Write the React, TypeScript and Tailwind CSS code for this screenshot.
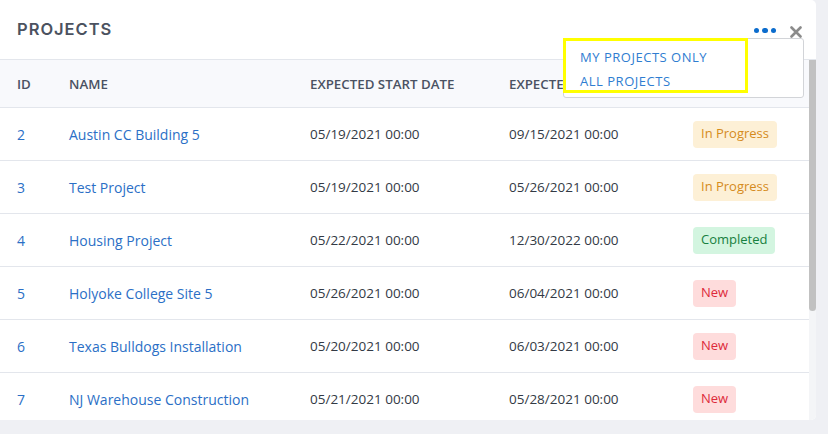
type Status = "In Progress" | "Completed" | "New";

type Project = {
    id: number;
    name: string;
    start: string;
    end: string;
    status: Status;
}

const projects: Project[] = [
    { id: 2, name: "Austin CC Building 5", start: "05/19/2021 00:00", end: "09/15/2021 00:00", status: "In Progress" },
    { id: 3, name: "Test Project", start: "05/19/2021 00:00", end: "05/26/2021 00:00", status: "In Progress" },
    { id: 4, name: "Housing Project", start: "05/22/2021 00:00", end: "12/30/2022 00:00", status: "Completed" },
    { id: 5, name: "Holyoke College Site 5", start: "05/26/2021 00:00", end: "06/04/2021 00:00", status: "New" },
    { id: 6, name: "Texas Bulldogs Installation", start: "05/20/2021 00:00", end: "06/03/2021 00:00", status: "New" },
    { id: 7, name: "NJ Warehouse Construction", start: "05/21/2021 00:00", end: "05/28/2021 00:00", status: "New" },
]

const badgeStyles: Record<Status, string> = {
    "In Progress": "bg-[#fdf0d6] text-[#d58b1c]",
    "Completed": "bg-[#d3f5e0] text-[#17803f]",
    "New": "bg-[#fedcdc] text-[#dd2a3a]",
}

const App = () => {
    return (
        <div className="w-[828px] h-[434px] bg-[#eff0f4] font-['Open_Sans',sans-serif]">
            <div className="relative w-[816px] h-[420px] bg-white rounded-r-[5px] flex flex-col overflow-hidden">
                <div className="h-[59px] shrink-0 flex items-center justify-between pl-[17px] pr-[14px]">
                    <h2 className="font-['Inter',sans-serif] font-semibold text-[16.5px] tracking-[0.06em] text-[#4b5260]">PROJECTS</h2>
                    <div className="flex items-center gap-[14px] pt-[2px]">
                        <div className="flex gap-[3px]">
                            <span className="w-[5.5px] h-[5.5px] rounded-full bg-[#0b6ccd]" />
                            <span className="w-[5.5px] h-[5.5px] rounded-full bg-[#0b6ccd]" />
                            <span className="w-[5.5px] h-[5.5px] rounded-full bg-[#0b6ccd]" />
                        </div>
                        <svg width="12" height="12" viewBox="0 0 12 12" className="mt-[3px]">
                            <path d="M1.5 1.5 L10.5 10.5 M10.5 1.5 L1.5 10.5" stroke="#8b8b8b" strokeWidth="2.6" strokeLinecap="round" />
                        </svg>
                    </div>
                </div>

                <div className="flex-1 flex min-h-0 border-t border-[#e3e6ec]">
                    <div className="flex-1 overflow-hidden">
                        <div className="grid grid-cols-[69px_241px_199px_184px_1fr] h-[48px] pt-[2px] items-center bg-[#f8f9fc] border-b border-[#e3e6ec] text-[13.3px] font-semibold text-[#4a5263]">
                            <div className="pl-[17px]">ID</div>
                            <div>NAME</div>
                            <div>EXPECTED START DATE</div>
                            <div>EXPECTED END DATE</div>
                            <div className="pl-[20px]">STATUS</div>
                        </div>
                        {projects.map(p => (
                            <div key={p.id} className="grid grid-cols-[69px_241px_199px_184px_1fr] h-[53px] items-center border-b border-[#e3e6ec]">
                                <div className="pl-[17px] text-[14px] text-[#2b6fc6]">{p.id}</div>
                                <div className="text-[14px] text-[#2b6fc6]">{p.name}</div>
                                <div className="text-[13.5px] text-[#333a45]">{p.start}</div>
                                <div className="text-[13.5px] text-[#333a45]">{p.end}</div>
                                <div>
                                    <span className={`inline-flex items-center h-[27px] px-[8px] rounded-[4px] text-[13px] ${badgeStyles[p.status]}`}>{p.status}</span>
                                </div>
                            </div>
                        ))}
                    </div>
                    <div className="w-[7px] shrink-0 bg-[#f4f5f7]">
                        <div className="h-[251px] bg-[#c1c1c1] rounded-b-[4px]" />
                    </div>
                </div>

                <div className="absolute left-[563px] top-[38px] w-[241px] h-[60px] bg-white border border-[#d2d4d8] rounded-[3px]">
                    <div className="-ml-px -mt-px w-[185px] h-[55px] border-[3px] border-[#ffff00] flex flex-col gap-[4px] pt-[7px] pl-[14px] text-[13px] tracking-[0.04em] text-[#2f7dd1]">
                        <span>MY PROJECTS ONLY</span>
                        <span>ALL PROJECTS</span>
                    </div>
                </div>
            </div>
        </div>
    )
}

export default App;
